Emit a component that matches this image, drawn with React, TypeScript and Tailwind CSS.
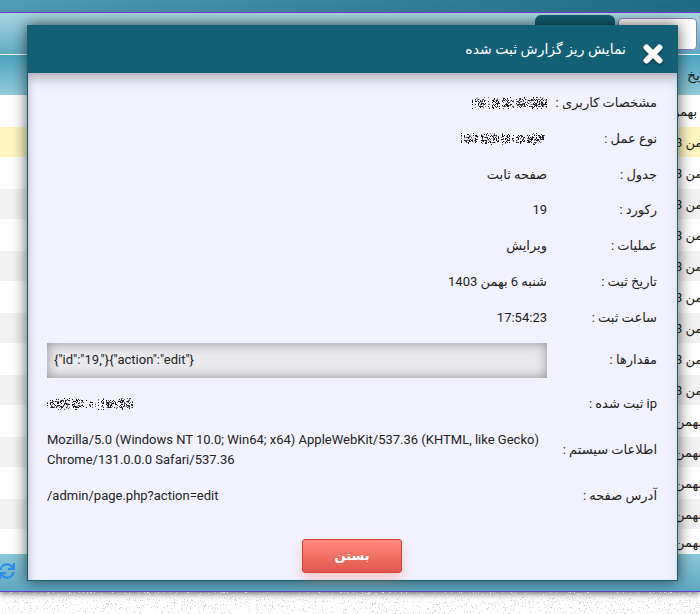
import type { ReactNode } from "react"
import { FaSync } from "react-icons/fa"

const font = { fontFamily: '"Roboto", "DejaVu Sans", sans-serif' }

const rows = [
  { h: "h-[32px]", bg: "bg-white", ml: "ml-[670px]", text: "بهمن" },
  { h: "h-[30px]", bg: "bg-[#fdf6c0]", ml: "ml-[653px]", text: "6 بهمن 1403" },
  { h: "h-[32px]", bg: "bg-white", ml: "ml-[653px]", text: "6 بهمن 1403" },
  { h: "h-[30px]", bg: "bg-[#f2f2f2]", ml: "ml-[653px]", text: "6 بهمن 1403" },
  { h: "h-[32px]", bg: "bg-white", ml: "ml-[653px]", text: "6 بهمن 1403" },
  { h: "h-[30px]", bg: "bg-[#f2f2f2]", ml: "ml-[653px]", text: "6 بهمن 1403" },
  { h: "h-[32px]", bg: "bg-white", ml: "ml-[653px]", text: "6 بهمن 1403" },
  { h: "h-[30px]", bg: "bg-[#f2f2f2]", ml: "ml-[653px]", text: "6 بهمن 1403" },
  { h: "h-[32px]", bg: "bg-white", ml: "ml-[653px]", text: "6 بهمن 1403" },
  { h: "h-[30px]", bg: "bg-[#f2f2f2]", ml: "ml-[653px]", text: "6 بهمن 1403" },
  { h: "h-[32px]", bg: "bg-white", ml: "ml-[675px]", text: "بهمن" },
  { h: "h-[30px]", bg: "bg-[#f2f2f2]", ml: "ml-[675px]", text: "بهمن" },
  { h: "h-[32px]", bg: "bg-white", ml: "ml-[675px]", text: "بهمن" },
  { h: "h-[30px]", bg: "bg-[#f2f2f2]", ml: "ml-[675px]", text: "بهمن" },
  { h: "h-[25px]", bg: "bg-white", ml: "ml-[675px]", text: "بهمن" },
]

function seeded(seed: number) {
  let s = seed
  return () => {
    s = (s * 16807) % 2147483647
    return s / 2147483647
  }
}

// pixelated-out value (an address or a name that was blurred in the capture)
function Redacted({ width, seed }: { width: number; seed: number }) {
  const rnd = seeded(seed)
  const cells = []
  let gap = 0
  for (let x = 0; x < width; x++) {
    if (gap > 0) {
      gap--
      continue
    }
    if (rnd() < 0.1) gap = 2
    for (let y = 0; y < 12; y++) {
      const chance = y < 2 || y > 9 ? 0.15 : 0.5
      if (rnd() < chance) {
        const v = rnd()
        cells.push(<rect key={x + "-" + y} x={x} y={y} width="1" height="1" fill={v < 0.55 ? "#1c1c1c" : v < 0.85 ? "#666" : "#b5b5c0"} />)
      }
    }
  }
  return (
    <svg width={width} height="12" className="block">
      {cells}
    </svg>
  )
}

function Speckle() {
  const rnd = seeded(77)
  const dots = []
  for (let i = 0; i < 1500; i++) {
    dots.push(<rect key={i} x={Math.floor(rnd() * 700)} y={Math.floor(rnd() * 22)} width="1" height="1" fill={rnd() < 0.5 ? "#d2d2d2" : "#e6e6e6"} />)
  }
  return (
    <svg width="700" height="22" className="block">
      {dots}
    </svg>
  )
}

function Row({ label, children, boxed }: { label: string; children: ReactNode; boxed?: boolean }) {
  return (
    <div className={boxed ? "flex items-center -mt-[1px] mb-[1px]" : "flex items-center"}>
      <div className="w-[110px] shrink-0 text-right text-[13px]">{label}</div>
      <div className={boxed ? "flex-1 h-[35px] flex items-center px-[7px] bg-[#eaeaee] shadow-[inset_0_0_12px_#8e8e92]" : "flex-1"}>
        {children}
      </div>
    </div>
  )
}

export default function App() {
  return (
    <div className="relative w-[700px] h-[614px] overflow-hidden bg-white text-[#222]" style={font}>
      <div className="h-[12px] bg-gradient-to-r from-[#4f9cb7] to-[#1d6a85]" />
      <div className="h-[580px] border-y border-[#6a3fd0] flex flex-col shadow-[0_2px_6px_#777]">
        <div className="h-[41px] shrink-0 bg-gradient-to-b from-[#a8d5df] to-[#62abc4] flex justify-end items-start gap-[3px] pr-[3px] pt-[2px]">
          <div className="w-[80px] h-[30px] rounded-t-md bg-[#135f75]" />
          <div className="w-[79px] h-[32px] mt-[3px] rounded bg-white border border-[#8a7bc0]" />
        </div>
        <div className="h-[41px] shrink-0 border-t border-white bg-gradient-to-b from-[#4aa3c0] to-[#93cbd8] flex items-center overflow-hidden">
          <span dir="rtl" className="text-[14px] ml-[687px] whitespace-nowrap">تاریخ</span>
        </div>
        <div className="shrink-0">
          {rows.map((r, i) => (
            <div key={i} className={"overflow-hidden flex items-center pt-[2px] " + r.h + " " + r.bg}>
              <span dir="rtl" className={"whitespace-nowrap text-[13px] " + r.ml}>{r.text}</span>
            </div>
          ))}
        </div>
        <div className="flex-1 bg-gradient-to-b from-[#8cc8d6] to-[#5ca8c3] flex items-center">
          <FaSync className="text-[#2f8df2] text-[16px] ml-[-1px] mt-[-3px]" />
        </div>
      </div>
      <Speckle />

      <div className="absolute left-[27px] top-[25px] w-[651px] h-[556px] border-x border-b border-[#135f75] bg-[#f2f2fe] shadow-[0_0_14px_rgba(0,0,0,0.65)] flex flex-col">
        <div dir="rtl" className="h-[48px] -mx-px shrink-0 bg-[#135f75] text-white flex items-center pr-[52px] text-[14px]">
          نمایش ریز گزارش ثبت شده
          <svg viewBox="0 0 20 20" className="absolute left-[615px] top-[19px] w-[20px] h-[20px] drop-shadow-[0_1px_1px_rgba(0,0,0,0.5)]" fill="none" stroke="#fff" strokeWidth="6" strokeLinecap="round">
            <path d="M3.5 3.5 L16.5 16.5 M16.5 3.5 L3.5 16.5" />
          </svg>
        </div>
        <div dir="rtl" className="flex-1 flex flex-col pt-[20px] pr-[20px] pl-[19px] text-[13px] leading-[20px] shadow-[inset_0_10px_14px_-6px_#a9a6b8,inset_6px_0_8px_-6px_#c8c6d8]">
          <div className="flex flex-col gap-[15.8px]">
            <Row label="مشخصات کاربری :"><div className="w-[75px] overflow-hidden"><Redacted width={75} seed={11} /></div></Row>
            <Row label="نوع عمل :"><Redacted width={86} seed={23} /></Row>
            <Row label="جدول :">صفحه ثابت</Row>
            <Row label="رکورد :">19</Row>
            <Row label="عملیات :">ویرایش</Row>
            <Row label="تاریخ ثبت :">شنبه 6 بهمن 1403</Row>
            <Row label="ساعت ثبت :">17:54:23</Row>
            <Row label="مقدارها :" boxed><span dir="ltr" className="block w-full text-left">{'{"id":"19,"}{"action":"edit"}'}</span></Row>
            <Row label="ip ثبت شده :"><div className="flex justify-end"><Redacted width={86} seed={37} /></div></Row>
            <Row label="اطلاعات سیستم :"><span dir="ltr" className="block text-left">Mozilla/5.0 (Windows NT 10.0; Win64; x64) AppleWebKit/537.36 (KHTML, like Gecko) Chrome/131.0.0.0 Safari/537.36</span></Row>
            <Row label="آدرس صفحه :"><span dir="ltr" className="block text-left">/admin/page.php?action=edit</span></Row>
          </div>
          <div className="flex justify-center mt-[33px]">
            <button className="w-[100px] h-[34px] rounded-[3px] border border-[#d9403a] bg-gradient-to-b from-[#ff8a7c] to-[#e0554d] text-white font-bold text-[13px] shadow-[0_6px_12px_rgba(240,120,110,0.35)]">
              بستن
            </button>
          </div>
        </div>
      </div>
    </div>
  )
}
